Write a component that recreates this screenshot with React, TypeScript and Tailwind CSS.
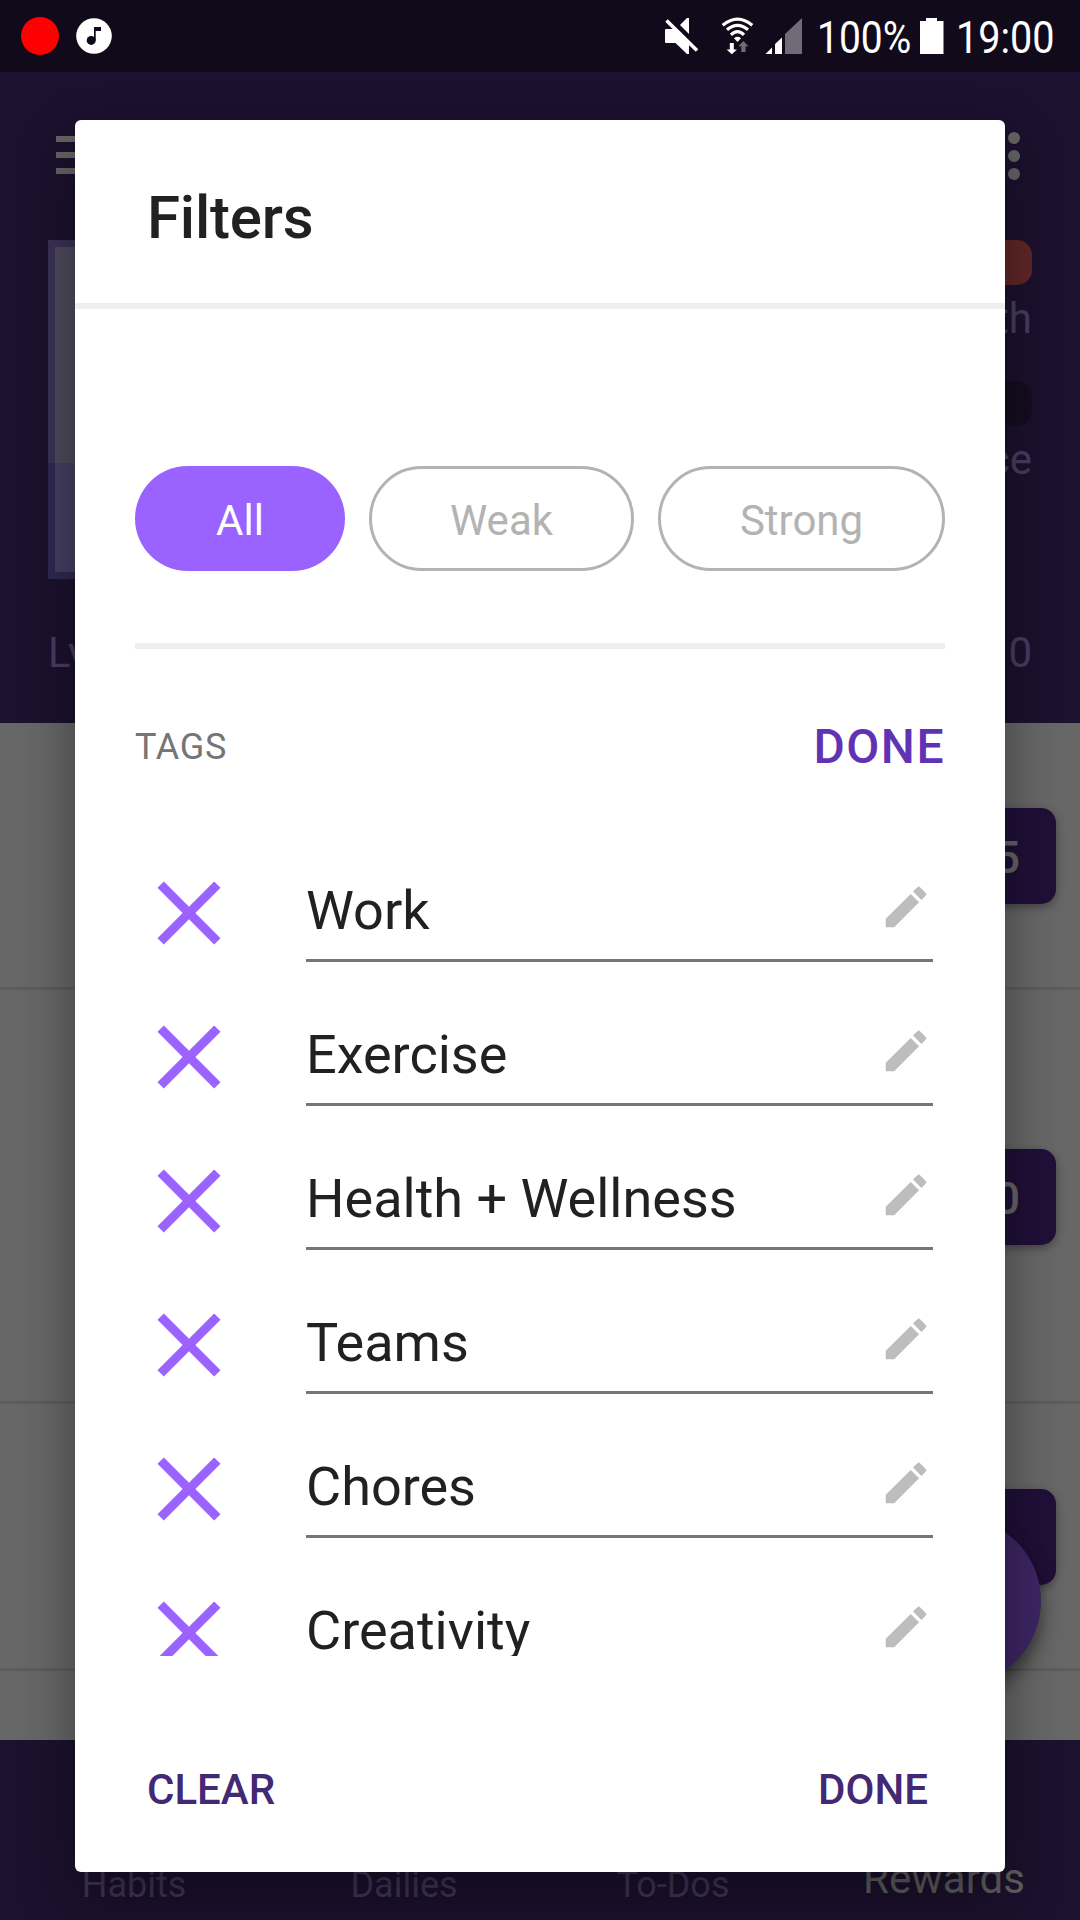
import React from "react";
import { MdClose, MdEdit } from "react-icons/md";

const tags = ["Work", "Exercise", "Health + Wellness", "Teams", "Chores", "Creativity"];

function StatusIcons() {
  return (
    <svg width="150" height="72" viewBox="660 0 150 72" className="shrink-0">
      <g fill="#fff">
        <path d="M666 29H674L689 43V54H687L675.5 43H666Q665 43 665 42V30Q665 29 666 29Z" />
        <path d="M680 25L687 18H689V34Z" />
        <path d="M666.5 20.5L697 50.5" stroke="#fff" strokeWidth="3.6" />
        <path d="M737.5 42L734 38.2Q737.5 35.4 741 38.2Z" />
        <path d="M729.8 43H733.8V49.5H737L731.8 54.3L726.6 49.5H729.8Z" />
      </g>
      <g fill="none" stroke="#fff" strokeWidth="3.2">
        <path d="M722.7 25.2Q737.5 13 752.3 25.2" />
        <path d="M727 29.8Q737.5 20.8 748 29.8" />
        <path d="M731 34.8Q737.5 28.4 744 34.8" />
      </g>
      <path d="M741.3 52V46.3H738.3L743.3 41L748.5 46.3H745.6V52Z" fill="#6f6b76" />
      <path d="M785 34L802 18V54H785Z" fill="#706c77" />
      <path d="M775 44L782 37.5V54H775ZM765.5 54L772 47.5V54Z" fill="#fff" />
    </svg>
  );
}

function StatusBar() {
  return (
    <div className="flex h-[72px] shrink-0 items-center bg-[#110a1a] pl-[21px] text-[45px] leading-[72px] text-white">
      <div className="size-[38px] rounded-full bg-[#ff0000]" />
      <svg width="36" height="36" viewBox="0 0 36 36" className="ml-[17px]">
        <circle cx="18" cy="18" r="17.8" fill="#fff" />
        <circle cx="15.2" cy="22.4" r="4.5" fill="#110a1a" />
        <path d="M18 9H25V13H19.7V22.4H18Z" fill="#110a1a" />
      </svg>
      <div className="ml-[548px]">
        <StatusIcons />
      </div>
      <div className="ml-[7px] w-[96px] pt-[3px]">
        <div className="w-max origin-left scale-x-[0.865]">100%</div>
      </div>
      <svg width="24" height="36" viewBox="0 0 24 36" className="ml-[7px]">
        <path d="M6 0H17V3H23.5V36H0V3H6Z" fill="#fff" />
      </svg>
      <div className="ml-[12px] pt-[3px]">
        <div className="w-max origin-left scale-x-[0.88]">19:00</div>
      </div>
    </div>
  );
}

function ProfileHeader() {
  return (
    <div className="h-[651px] shrink-0 bg-[#1c112e] px-12 pt-16 text-[42px] leading-[48px] text-[#483c62]">
      <div className="flex h-[38px] justify-between pl-2 pr-3">
        <div className="flex w-[54px] flex-col gap-[10px]">
          <div className="h-[6px] bg-[#646464]" />
          <div className="h-[6px] bg-[#646464]" />
          <div className="h-[6px] bg-[#646464]" />
        </div>
        <div className="-mt-1 flex flex-col gap-[6px]">
          <div className="size-3 shrink-0 rounded-full bg-[#646464]" />
          <div className="size-3 shrink-0 rounded-full bg-[#646464]" />
          <div className="size-3 shrink-0 rounded-full bg-[#646464]" />
        </div>
      </div>
      <div className="mt-[66px] flex h-[339px] justify-between">
        <div className="flex w-[339px] flex-col">
          <div className="h-[223px] border-[7px] border-b-0 border-[#3a3253] bg-[#4e4a5d]" />
          <div className="h-[116px] border-[7px] border-t-0 border-[#2f2850] bg-[#463f63]" />
        </div>
        <div className="flex w-[560px] flex-col text-right">
          <div className="h-[45px] rounded-[15px] bg-[#5f2626]" />
          <div className="mt-[10px]">Health</div>
          <div className="mt-[38px] h-[45px] rounded-[15px] bg-[#150d20]" />
          <div className="mt-[10px]">Experience</div>
        </div>
      </div>
      <div className="mt-[50px] flex justify-between">
        <span>Lv 5</span>
        <span>0</span>
      </div>
    </div>
  );
}

function Price({ children }: { children?: React.ReactNode }) {
  return (
    <div className="h-24 w-[170px] rounded-[15px] bg-[#200f37] pr-[36px] text-right text-[45px] font-medium leading-[100px] text-[#646464] shadow-[0_3px_8px_rgba(0,0,0,0.35)]">
      {children}
    </div>
  );
}

function Rewards() {
  return (
    <div className="relative h-[1017px] shrink-0 overflow-hidden bg-[#676767]">
      <div className="flex h-[267px] justify-end border-b-3 border-[#5c5c5c] pr-6 pt-[85px]">
        <Price>25</Price>
      </div>
      <div className="flex h-[414px] justify-end border-b-3 border-[#5c5c5c] pr-6 pt-[159px]">
        <Price>10</Price>
      </div>
      <div className="flex h-[267px] justify-end border-b-3 border-[#5c5c5c] pr-6 pt-[85px]">
        <Price />
      </div>
      <div className="absolute right-[39px] top-[794px] size-[168px] rounded-full bg-[#3d2563] shadow-[0_10px_18px_rgba(0,0,0,0.5)]" />
    </div>
  );
}

function BottomBar() {
  return (
    <div className="grid h-[180px] shrink-0 grid-cols-4 bg-[#1c112e] pt-[121px] text-center text-[36px] leading-[48px] text-[#40365a]">
      <div className="-ml-[2px]">Habits</div>
      <div className="-ml-[2px]">Dailies</div>
      <div className="-ml-[4px]">To-Dos</div>
      <div className="-ml-[2px] -mt-[6px] text-[42px] text-[#616161]">Rewards</div>
    </div>
  );
}

function Chip({ children, className }: { children: React.ReactNode; className: string }) {
  return (
    <div className={"flex h-[105px] items-center justify-center rounded-full pt-1 text-[42px] leading-[48px] " + className}>
      {children}
    </div>
  );
}

function TagRow({ name }: { name: string }) {
  return (
    <div className="flex h-36 shrink-0">
      <MdClose className="mt-5 size-[108px] shrink-0 text-[#9a62ff]" />
      <div className="ml-[63px] flex h-[123px] w-[627px] items-start justify-between border-b-3 border-[#757575]">
        <span className="mt-10 text-[54px] leading-[64px] text-[#212121]">{name}</span>
        <MdEdit className="mt-[41px] size-[54px] text-[#bdbdbd]" />
      </div>
    </div>
  );
}

function FilterDialog() {
  return (
    <div className="absolute left-[75px] top-[120px] flex h-[1752px] w-[930px] flex-col rounded-[6px] bg-white shadow-[0_24px_54px_rgba(0,0,0,0.4)]">
      <div className="h-[189px] shrink-0 border-b-6 border-[#eeeeee] pl-[72px] pt-[68px] text-[60px] font-medium leading-[60px] tracking-[-0.2px] text-[#212121]">
        Filters
      </div>
      <div className="flex h-[1347px] shrink-0 flex-col px-[60px] pt-[157px]">
        <div className="flex shrink-0 gap-6">
          <Chip className="w-[210px] bg-[#9a62ff] text-white">All</Chip>
          <Chip className="w-[265px] border-3 border-[#b3b3b3] text-[#b3b3b3]">Weak</Chip>
          <Chip className="w-[287px] border-3 border-[#b3b3b3] text-[#b3b3b3]">Strong</Chip>
        </div>
        <div className="mt-[72px] h-[6px] shrink-0 bg-[#eeeeee]" />
        <div className="mt-[50px] flex h-24 shrink-0 items-center justify-between">
          <span className="text-[36px] leading-[36px] tracking-[0.7px] text-[#757575]">TAGS</span>
          <span className="text-[48px] font-medium leading-[48px] tracking-[1.5px] text-[#6133b4]">DONE</span>
        </div>
        <div className="mt-11 flex h-[817px] shrink-0 flex-col overflow-hidden">
          {tags.map((tag) => (
            <TagRow key={tag} name={tag} />
          ))}
        </div>
      </div>
      <div className="flex justify-between pl-[72px] pr-[77px] pt-[113px] text-[42px] font-medium leading-[42px] text-[#432874]">
        <span>CLEAR</span>
        <span>DONE</span>
      </div>
    </div>
  );
}

export default function App() {
  return (
    <div className="relative flex h-[1920px] w-[1080px] flex-col overflow-hidden font-['Roboto',sans-serif]">
      <StatusBar />
      <ProfileHeader />
      <Rewards />
      <BottomBar />
      <FilterDialog />
    </div>
  );
}
